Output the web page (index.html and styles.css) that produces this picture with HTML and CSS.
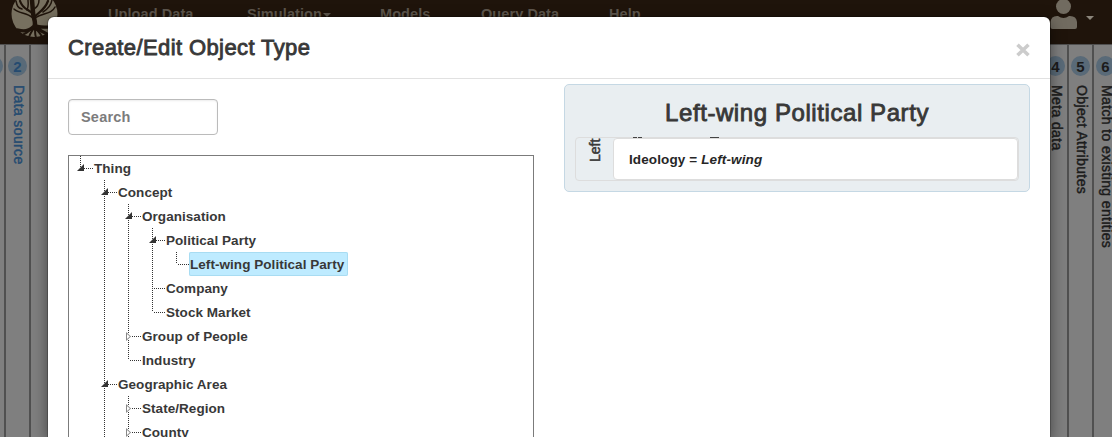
FILE: index.html
```html
<!DOCTYPE html>
<html lang="en">
<head>
<meta charset="utf-8">
<title>Create/Edit Object Type</title>
<link rel="stylesheet" href="styles.css">
</head>
<body>
<header class="navbar">
  <svg class="logo" width="48" height="44" viewBox="0 0 48 44">
    <circle cx="23.500" cy="14" r="23" fill="#77705f"/>
    <g fill="none" stroke="#1f140b" stroke-linecap="round">
      <path d="M23 28C26 23 22 18 22 12L21 0" stroke-width="4.500"/>
      <path d="M23 18C26 12 33 12 37 1M22 14C18 9 12 10 9 1" stroke-width="2.200"/>
      <path d="M24 18C32 12 40 15 44 7M22 18C15 12 8 14 3 9M22 10C26 7 28 5 28 0M16 10C18 6 17 3 17 0M32 12C37 9 40 6 41 0M11 9C7 8 6 6 5 1" stroke-width="1.500"/>
      <path d="M24 25C27 28 32 27 40 27M23 26C27 30 31 31 36 34M22 27C19 30 14 32 7 30" stroke-width="3.200"/>
      <path d="M21 28C18 31 16 33 13 34M22 29C20 33 19 34 18 37M24 29C24 33 24 35 25 38M25 29C28 32 30 34 31 37" stroke-width="2"/>
    </g>
  </svg>
  <nav class="menu">
    <span class="m1">Upload Data</span>
    <span class="m2">Simulation<i class="caret"></i></span>
    <span class="m3">Models</span>
    <span class="m4">Query Data</span>
    <span class="m5">Help</span>
  </nav>
  <div class="user">
    <svg width="27" height="30" viewBox="0 0 27 30" fill="#716b60"><circle cx="13.5" cy="6.500" r="7.5"/><path d="M0.5 27V22Q1 16 7 16H8Q13.500 20 19 16H20Q26.500 16 27 22V27Q27 29 25 29H2.500Q.5 29 .5 27Z"/></svg>
    <i class="caret"></i>
  </div>
</header>
<div class="workspace">
  <div class="steps left">
    <section class="step s1"><i class="num"></i></section>
    <section class="step s2 active"><b class="num">2</b><span class="label">Data source</span></section>
  </div>
  <div class="steps right">
    <section class="step s4"><b class="num">4</b><span class="label">Meta data</span></section>
    <section class="step s5"><b class="num">5</b><span class="label">Object Attributes</span></section>
    <section class="step s6"><b class="num">6</b><span class="label">Match to existing entities</span></section>
  </div>
</div>
<div class="modal">
  <div class="modal-head">
    <h1 class="title">Create/Edit Object Type</h1>
    <svg class="close" width="14" height="14" viewBox="0 0 14 14"><path d="M1.500 1.800L12.500 12.200M12.500 1.800L1.500 12.200" stroke="#ccc" stroke-width="3.600"/></svg>
  </div>
  <div class="modal-body">
    <div class="browse">
      <div class="search">Search</div>
      <div class="tree-box">
        <ul class="tree">
          <li class="node open"><span class="name">Thing</span>
            <ul class="tree">
              <li class="node open"><span class="name">Concept</span>
                <ul class="tree">
                  <li class="node open"><span class="name">Organisation</span>
                    <ul class="tree">
                      <li class="node open"><span class="name">Political Party</span>
                        <ul class="tree"><li class="node"><span class="name selected">Left-wing Political Party</span></li></ul>
                      </li>
                      <li class="node"><span class="name">Company</span></li>
                      <li class="node"><span class="name">Stock Market</span></li>
                    </ul>
                  </li>
                  <li class="node closed"><span class="name">Group of People</span></li>
                  <li class="node"><span class="name">Industry</span></li>
                </ul>
              </li>
              <li class="node open more"><span class="name">Geographic Area</span>
                <ul class="tree">
                  <li class="node closed"><span class="name">State/Region</span></li>
                  <li class="node closed more"><span class="name">County</span></li>
                </ul>
              </li>
            </ul>
          </li>
        </ul>
      </div>
    </div>
    <div class="detail">
      <h2 class="detail-title">Left-wing Political Party</h2>
      <div class="group">
        <div class="side"><span class="side-text">Left</span></div>
        <div class="rule">Ideology = <em>Left-wing</em></div>
      </div>
    </div>
  </div>
</div>
</body>
</html>
```
FILE: styles.css
```css
* { box-sizing: border-box; }
body { margin: 0; width: 1112px; height: 437px; overflow: hidden; position: relative; background: #7f7f7f; color: #383838; font: 14px/20px "Liberation Sans", Arial, sans-serif; }
h1, h2, ul { margin: 0; padding: 0; font-weight: normal; }
.navbar { height: 44px; background: #1f140b; display: flex; align-items: flex-start; color: #5d564d; overflow: hidden; }
.logo { margin-left: 11px; margin-right: 49px; flex: none; }
.menu { display: flex; flex: 1; padding-top: 4px; font-size: 14.5px; font-weight: bold; letter-spacing: .08px; white-space: nowrap; }
.m1 { width: 139px; }
.m2 { width: 133px; }
.m3 { width: 101px; }
.m4 { width: 128px; }
.caret { display: inline-block; border: 4px solid transparent; border-top-color: currentColor; border-bottom: 0; vertical-align: 2px; margin-left: 1px; }
.user { display: flex; width: 62px; color: #8b857b; }
.user .caret { margin: 16px 0 0 9px; }
.workspace { display: flex; justify-content: space-between; height: 393px; border-top: 1px solid #505050; }
.steps { display: flex; }
.step { border-right: 2px solid #505050; padding-top: 11px; display: flex; flex-direction: column; align-items: center; }
.s1 { width: 6px; align-items: flex-end; }
.s1 .num { margin-right: 1px; }
.s2 { width: 25px; }
.right { width: 69px; overflow: hidden; }
.s4, .s5, .s6 { flex: none; width: 25px; }
.s4 { margin-left: 1px; }
.num { flex: none; width: 19px; height: 20px; border-radius: 50%; background: #596a78; color: #1c1c1c; text-align: center; font-size: 15px; line-height: 21px; }
.label { writing-mode: vertical-rl; white-space: nowrap; color: #1c1c1c; margin: 9px 0 0 2px; font-size: 14px; line-height: 20px; letter-spacing: .38px; -webkit-text-stroke: .45px currentColor; }
.active .num, .active .label { color: #254b70; }
.modal { position: absolute; left: 48px; top: 17px; width: 1002px; height: 420px; background: #fff; border-radius: 6px 6px 0 0; box-shadow: 0 0 0 1px rgba(0,0,0,.2), 0 5px 15px rgba(0,0,0,.5); }
.modal-head { height: 62px; border-bottom: 1px solid #e1e1e1; display: flex; justify-content: space-between; padding: 16px 20px 0 20px; }
.title { font-size: 22px; line-height: 30px; letter-spacing: .4px; -webkit-text-stroke: .85px currentColor; }
.close { margin-top: 10px; }
.modal-body { display: flex; justify-content: space-between; align-items: flex-start; padding: 5px 20px 0; }
.browse { padding-top: 15px; width: 466px; }
.search { width: 150px; height: 36px; border: 1px solid #bbb; border-radius: 4px; box-shadow: inset 0 1px 2px rgba(0,0,0,.08); padding: 7px 12px; font-size: 14.5px; letter-spacing: .2px; font-weight: bold; color: #7c7c7c; margin-bottom: 20px; }
.tree-box { height: 282px; border: 1px solid #7b7b7b; border-bottom: 0; padding-left: 1px; overflow: hidden; }
.tree { list-style: none; }
.node { position: relative; padding-left: 24px; }
.node::before { content: ""; position: absolute; left: 10px; top: 0; bottom: 0; width: 1px; background: repeating-linear-gradient(#333 0 1px, transparent 1px 2px); }
.node:last-child:not(.more)::before { bottom: auto; height: 12px; }
.node::after { content: ""; position: absolute; left: 11px; top: 12px; width: 13px; height: 1px; background: repeating-linear-gradient(90deg, transparent 0 1px, #333 1px 2px); }
.name { display: block; width: max-content; height: 24px; line-height: 25px; font-size: 13.5px; font-weight: bold; letter-spacing: .05px; }
.open > .name::before { content: ""; position: absolute; left: 7px; top: 8px; width: 7px; height: 7px; background: #333; clip-path: polygon(100% 0, 100% 100%, 0 100%); }
.closed > .name::before, .closed > .name::after { content: ""; position: absolute; z-index: 1; left: 8px; top: 8px; width: 5px; height: 9px; background: #fff; clip-path: polygon(0 0, 100% 50%, 0 100%); }
.closed > .name::after { background: #888; clip-path: polygon(0 0, 5px 4.5px, 0 9px, 0 0, 1px 2px, 1px 7px, 3.8px 4.5px, 1px 2px); }
.selected { background: #beebff; box-shadow: inset 0 0 0 1px #a8dcf2; border-radius: 2px; margin-left: -1px; padding: 0 4px 0 1px; }
.detail { width: 466px; height: 108px; background: #e9eef1; border: 1px solid #c5d8e4; border-radius: 5px; padding: 11px 10px; }
.detail-title { font-size: 24px; line-height: 34px; text-align: center; letter-spacing: .58px; -webkit-text-stroke: .85px currentColor; margin-bottom: 7px; }
.group { position: relative; display: flex; height: 44px; border: 1px solid #ddd; border-radius: 4px; }
/* lower edges of the caption that is clipped behind the rule card */
.group::before { content: ""; position: absolute; left: 57px; top: -1px; width: 86px; height: 1px; background: linear-gradient(90deg, #444 0 4px, transparent 4px 5px, #444 5px 9px, transparent 9px 77px, #444 77px); }
.side { width: 37px; display: flex; justify-content: center; }
.side-text { writing-mode: vertical-rl; transform: rotate(180deg); height: 24px; -webkit-text-stroke: .5px currentColor; }
.rule { flex: 1; background: #fff; border: 1px solid #ddd; border-radius: 4px; padding: 11px 15px; font-size: 13.5px; font-weight: bold; color: #262626; letter-spacing: .12px; }
```
